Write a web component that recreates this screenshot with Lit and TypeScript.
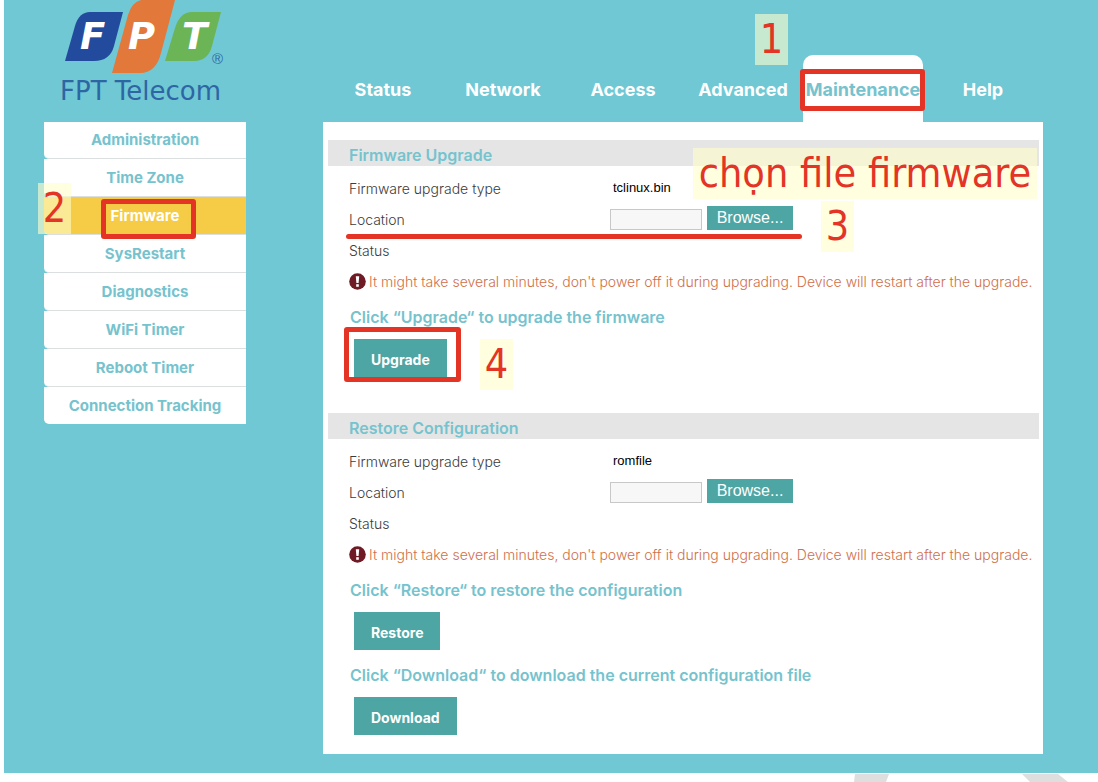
import { LitElement, html, css, svg, nothing } from "lit";
import { customElement, property } from "lit/decorators.js";
import { classMap } from "lit/directives/class-map.js";

const TABS = ["Status", "Network", "Access", "Advanced", "Maintenance", "Help"];
const MENU = [
  "Administration",
  "Time Zone",
  "Firmware",
  "SysRestart",
  "Diagnostics",
  "WiFi Timer",
  "Reboot Timer",
  "Connection Tracking",
];

@customElement("fpt-logo")
class FptLogo extends LitElement {
  static styles = css`
    :host {
      display: block;
    }
    .mark {
      display: block;
      width: 202px;
      height: 76px;
    }
    .letter {
      font: italic bold 37px "DejaVu Sans", sans-serif;
      fill: #fff;
    }
    .reg {
      font: 15px "Liberation Sans", sans-serif;
      fill: #2f6ba5;
    }
    .name {
      margin: 0 0 0 16px;
      font: 26px/30px "DejaVu Sans", sans-serif;
      color: #2e66a3;
      white-space: nowrap;
    }
  `;

  render() {
    return html`
      <svg class="mark" viewBox="0 0 202 76" role="img" aria-label="FPT">
        ${svg`
          <path d="M46 12H79L70 46Q66 61 50 61H21L31 26Q35 12 46 12Z" fill="#224b9e"/>
          <path d="M97 0H131L117 53Q112 73 96 73H68L84 15Q88 2 97 0Z" fill="#e27839"/>
          <path d="M148 12H177L168 46Q164 61 150 61H121L131 28Q136 12 148 12Z" fill="#6bb556"/>
          <text class="letter" x="36" y="49">F</text>
          <text class="letter" x="84" y="49">P</text>
          <text class="letter" x="138" y="49">T</text>
          <text class="reg" x="168" y="64">®</text>
        `}
      </svg>
      <p class="name">FPT Telecom</p>
    `;
  }
}

@customElement("upgrade-section")
class UpgradeSection extends LitElement {
  @property() heading = "";
  @property() file = "";
  @property({ type: Boolean }) marked = false;

  static styles = css`
    :host {
      display: block;
    }
    .bar {
      margin: 0 0 7px;
      padding-left: 21px;
      background: #e5e5e5;
      color: #76c3ce;
      font-size: 16px;
      font-weight: 600;
      line-height: 26px;
      padding-top: 2px;
      height: 24px;
    }
    .row {
      position: relative;
      display: grid;
      grid-template-columns: 261px 1fr;
      align-items: center;
      height: 31px;
      padding-left: 21px;
      color: #3c3c3c;
      font-size: 14px;
      font-weight: 300;
      white-space: nowrap;
    }
    .value {
      padding: 0 0 2px 3px;
      color: #000;
      font: 13px "Liberation Sans", Arial, sans-serif;
    }
    .picker {
      display: flex;
      align-items: end;
      gap: 5px;
      padding-bottom: 3px;
    }
    .path {
      box-sizing: border-box;
      width: 92px;
      height: 21px;
      border: 1px solid #c8c8c8;
      background: #f7f7f7;
      padding: 0 4px;
      border-radius: 0;
    }
    .browse {
      width: 86px;
      height: 24px;
      padding: 0;
      border: 0;
      background: #4da5a4;
      color: #fff;
      font: 16px "Liberation Sans", Arial, sans-serif;
    }
    .warn {
      display: flex;
      align-items: center;
      gap: 3px;
      height: 31px;
      margin: 0;
      padding-left: 21px;
      color: #d06f4a;
      font-size: 14px;
      font-weight: 300;
      white-space: nowrap;
    }
    .icon {
      flex: none;
      width: 17px;
      height: 17px;
    }
    .stroke {
      position: absolute;
      left: 18px;
      top: 30px;
      width: 456px;
      height: 5px;
      border-radius: 3px;
      background: #e33426;
    }
  `;

  render() {
    return html`
      <h2 class="bar">${this.heading}</h2>
      <div class="row"><span>Firmware upgrade type</span><span class="value">${this.file}</span></div>
      <div class="row">
        <label for="path">Location</label>
        <span class="picker">
          <input class="path" id="path" type="text" readonly />
          <button class="browse" type="button">Browse...</button>
        </span>
        ${this.marked ? html`<i class="stroke"></i>` : nothing}
      </div>
      <div class="row"><span>Status</span></div>
      <p class="warn">
        <svg class="icon" viewBox="0 0 17 17" aria-hidden="true">
          <circle cx="8.5" cy="8.5" r="8.3" fill="#6f1b26" />
          <path d="M6.8 3.2H10.2L9.6 10H7.4Z" fill="#fff" />
          <rect x="7.2" y="11.2" width="2.6" height="2.6" fill="#fff" />
        </svg>
        <span>It might take several minutes, don't power off it during upgrading. Device will restart after the upgrade.</span>
      </p>
    `;
  }
}

@customElement("app-root")
class AppRoot extends LitElement {
  static styles = css`
    :host {
      display: block;
      background: #fff;
      font-family: Inter, Roboto, sans-serif;
      overflow: hidden;
    }
    .page {
      display: grid;
      grid-template-columns: 202px 1fr;
      column-gap: 77px;
      margin-left: 4px;
      padding: 0 55px 19px 40px;
      background: #70c8d4;
    }
    .tabs {
      display: grid;
      grid-template-columns: repeat(6, 1fr);
      align-items: end;
      height: 122px;
    }
    .tab {
      position: relative;
      height: 67px;
      line-height: 70px;
      text-align: center;
      color: #fff;
      font-size: 18px;
      font-weight: 700;
      text-decoration: none;
      white-space: nowrap;
    }
    .tab.on {
      background: #fff;
      color: #76c3ce;
      border-radius: 10px 10px 0 0;
    }
    .menu {
      display: flex;
      flex-direction: column;
      align-self: start;
    }
    .item {
      position: relative;
      border-bottom: 1px solid #dcdfe0;
      border-bottom-left-radius: 5px;
      background: #fff;
      color: #76c3ce;
      font-size: 15px;
      font-weight: 700;
      line-height: 37px;
      text-align: center;
      text-decoration: none;
    }
    .item:first-child {
      line-height: 36px;
    }
    .item:last-child {
      border-bottom: 0;
    }
    .item.on {
      background: #f6cb45;
      color: #fff;
    }
    .panel {
      padding: 18px 4px 19px 5px;
      background: #fff;
    }
    .hint {
      margin: 5px 0 7px 22px;
      color: #76c3ce;
      font-size: 16px;
      font-weight: 600;
      line-height: 30px;
      white-space: nowrap;
    }
    .act {
      position: relative;
      width: fit-content;
      margin-left: 26px;
    }
    .act.gap {
      margin-bottom: 36px;
    }
    .act.near {
      margin-bottom: 10px;
    }
    .button {
      display: block;
      height: 38px;
      padding: 3px 17px 0;
      border: 0;
      background: #4da5a4;
      color: #fff;
      font: 700 14px Inter, Roboto, sans-serif;
    }
    .frame {
      position: absolute;
      box-sizing: border-box;
      border: 5px solid #e33426;
      border-radius: 3px;
    }
    .frame.tabbox {
      left: -3px;
      top: 14px;
      width: 125px;
      height: 42px;
    }
    .frame.itembox {
      left: 57px;
      top: 2px;
      width: 95px;
      height: 40px;
      z-index: 1;
    }
    .frame.actbox {
      left: -10px;
      top: -12px;
      width: 117px;
      height: 55px;
    }
    .note {
      position: absolute;
      z-index: 2;
      width: 33px;
      background: rgba(255, 255, 204, 0.6);
      color: #e33426;
      font: 41px/51px "DejaVu Sans Condensed", "DejaVu Sans", sans-serif;
      text-align: center;
      white-space: nowrap;
    }
    .note.one {
      left: -48px;
      top: -41px;
    }
    .note.two {
      left: -6px;
      top: -14px;
    }
    .note.four {
      left: 126px;
      top: 0;
    }
    .note.file {
      left: 365px;
      top: 8px;
      width: 344px;
    }
    .note.three {
      left: 493px;
      top: 61px;
    }
    .first {
      position: relative;
    }
    .mark {
      display: block;
      width: 244px;
      height: 9px;
      margin-left: auto;
    }
  `;

  render() {
    return html`
      <div class="page">
        <fpt-logo></fpt-logo>
        <nav class="tabs" aria-label="Main">
          ${TABS.map((t) => {
            const on = t === "Maintenance";
            return html`<a href="#" class=${classMap({ tab: true, on })}
              >${t}${on ? html`<i class="frame tabbox"></i><span class="note one">1</span>` : nothing}</a
            >`;
          })}
        </nav>
        <nav class="menu" aria-label="Maintenance">
          ${MENU.map((m) => {
            const on = m === "Firmware";
            return html`<a href="#" class=${classMap({ item: true, on })}
              >${m}${on ? html`<i class="frame itembox"></i><span class="note two">2</span>` : nothing}</a
            >`;
          })}
        </nav>
        <main class="panel">
          <div class="first">
            <upgrade-section heading="Firmware Upgrade" file="tclinux.bin" marked></upgrade-section>
            <span class="note file">chọn file firmware</span>
            <span class="note three">3</span>
          </div>
          <p class="hint">Click “Upgrade“ to upgrade the firmware</p>
          <div class="act gap">
            <button class="button" type="button">Upgrade</button>
            <i class="frame actbox"></i>
            <span class="note four">4</span>
          </div>
          <upgrade-section heading="Restore Configuration" file="romfile"></upgrade-section>
          <p class="hint">Click “Restore“ to restore the configuration</p>
          <div class="act near"><button class="button" type="button">Restore</button></div>
          <p class="hint">Click “Download“ to download the current configuration file</p>
          <div class="act"><button class="button" type="button">Download</button></div>
        </main>
      </div>
      <svg class="mark" viewBox="0 0 244 9" aria-hidden="true">
        <path d="M1 1H35L32 9H0ZM168 1H204L214 9H176Z" fill="#dedede" />
      </svg>
    `;
  }
}
